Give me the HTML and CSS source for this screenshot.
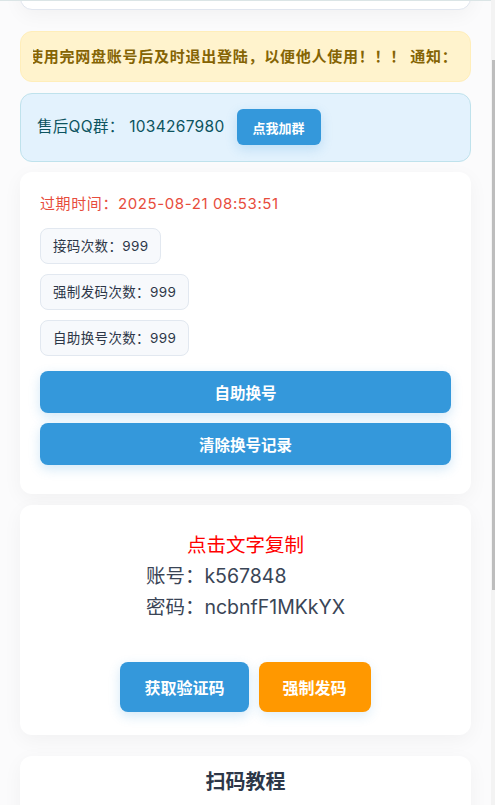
FILE: index.html
```html
<!DOCTYPE html>
<html lang="zh-CN">
<head>
<meta charset="utf-8">
<meta name="viewport" content="width=device-width, initial-scale=1">
<title>账号信息</title>
<link rel="stylesheet" href="styles.css">
</head>
<body>
<div class="topline"></div>
<div class="scrollbar"><div class="thumb"></div></div>
<main class="page">
  <section class="card stub"></section>

  <div class="notice">
    <div class="marquee"><span class="marquee-text">使用完网盘账号后及时退出登陆，以便他人使用！！！ 通知：</span></div>
  </div>

  <div class="qq">
    <span class="qq-text">售后QQ群： 1034267980</span>
    <button class="btn btn-small">点我加群</button>
  </div>

  <section class="card info">
    <div class="expire">过期时间：2025-08-21 08:53:51</div>
    <div class="chips">
      <div class="chip">接码次数：999</div>
      <div class="chip">强制发码次数：999</div>
      <div class="chip">自助换号次数：999</div>
    </div>
    <div class="actions">
      <button class="btn btn-block">自助换号</button>
      <button class="btn btn-block">清除换号记录</button>
    </div>
  </section>

  <section class="card account">
    <div class="copy-tip">点击文字复制</div>
    <div class="cred">
      <div class="cred-line">账号：k567848</div>
      <div class="cred-line">密码：ncbnfF1MKkYX</div>
    </div>
    <div class="code-actions">
      <button class="btn btn-code">获取验证码</button>
      <button class="btn btn-code btn-orange">强制发码</button>
    </div>
  </section>

  <section class="card tutorial">
    <h2 class="tutorial-title">扫码教程</h2>
    <div class="tutorial-body"></div>
  </section>
</main>
</body>
</html>
```

FILE: styles.css
```css
html, body {
  margin: 0;
  padding: 0;
  height: 805px;
  overflow: hidden;
}

body {
  background: #fbfbfc;
  font-family: "Inter", "Noto Sans CJK SC", "Noto Sans", sans-serif;
  color: #2d3748;
}

.topline {
  position: fixed;
  top: 0;
  left: 0;
  right: 0;
  height: 1px;
  background: #dbe5e6;
  z-index: 5;
}

.scrollbar {
  position: fixed;
  top: 0;
  right: 0;
  width: 4px;
  height: 805px;
  background: #f3f3f3;
  z-index: 5;
}

.thumb {
  margin-top: 60px;
  margin-left: 1px;
  width: 3px;
  height: 530px;
  background: #bdbdbd;
}

.page {
  display: flex;
  flex-direction: column;
  padding: 0 24px 0 20px;
}

.card {
  background: #ffffff;
  border-radius: 12px;
  box-shadow: 0 5px 20px rgba(0, 0, 0, 0.045);
}

.stub {
  height: 40px;
  margin-top: -30px;
  border: 1px solid #e1e6ef;
  box-sizing: border-box;
}

.notice {
  margin-top: 21px;
  background: #fff3cd;
  border: 1px solid #ffeeba;
  border-radius: 12px;
  padding: 14px 12px;
}

.marquee {
  overflow: hidden;
  white-space: nowrap;
  line-height: 21px;
}

.marquee-text {
  display: inline-block;
  margin-left: -5px;
  font-size: 15px;
  font-weight: 700;
  letter-spacing: 0.75px;
  color: #856404;
}

.qq {
  margin-top: 11px;
  display: flex;
  align-items: center;
  background: #e3f2fd;
  border: 1px solid #bfe2ec;
  border-radius: 12px;
  padding: 15px 16px 16px;
}

.qq-text {
  font-size: 15.5px;
  letter-spacing: 0.3px;
  color: #0c5460;
  line-height: 22px;
}

.btn {
  font-family: "Inter", "Noto Sans CJK SC", sans-serif;
  border: none;
  color: #ffffff;
  font-weight: 700;
  background: #3498db;
  border-radius: 8px;
  box-shadow: 0 4px 12px rgba(52, 152, 219, 0.22);
  cursor: pointer;
}

.btn-small {
  margin-left: 12px;
  height: 36px;
  padding: 0 16px;
  font-size: 13px;
  border-radius: 6px;
}

.info {
  margin-top: 10px;
  padding: 20px 20px 29px;
}

.expire {
  font-size: 15px;
  letter-spacing: 0.6px;
  line-height: 24px;
  color: #e74c3c;
}

.chips {
  margin-top: 12px;
  display: flex;
  flex-direction: column;
  align-items: flex-start;
  gap: 10px;
}

.chip {
  box-sizing: border-box;
  height: 36px;
  line-height: 34px;
  padding: 0 12px;
  font-size: 13.5px;
  letter-spacing: 0.35px;
  color: #2d3748;
  background: #f7f9fc;
  border: 1px solid #e2e8f0;
  border-radius: 8px;
}

.actions {
  margin-top: 15px;
  display: flex;
  flex-direction: column;
  gap: 10px;
}

.btn-block {
  height: 42px;
  font-size: 15.5px;
}

.account {
  margin-top: 11px;
  padding: 25px 20px 23px;
  text-align: center;
}

.copy-tip {
  font-size: 19.5px;
  line-height: 31px;
  color: #ff0000;
}

.cred {
  display: inline-block;
  text-align: left;
}

.cred-line {
  font-size: 19.5px;
  line-height: 31px;
  color: #3a4556;
}

.code-actions {
  margin-top: 39px;
  display: flex;
  justify-content: center;
  gap: 10px;
}

.btn-code {
  height: 50px;
  padding: 0 24px;
  font-size: 16px;
}

.btn-orange {
  background: #ff9800;
  box-shadow: 0 4px 12px rgba(52, 152, 219, 0.16);
}

.tutorial {
  margin-top: 21px;
  padding: 14px 20px 20px;
  text-align: center;
}

.tutorial-title {
  margin: 0;
  font-size: 20px;
  line-height: 24px;
  font-weight: 700;
  color: #2d3748;
}

.tutorial-body {
  height: 200px;
}
```
